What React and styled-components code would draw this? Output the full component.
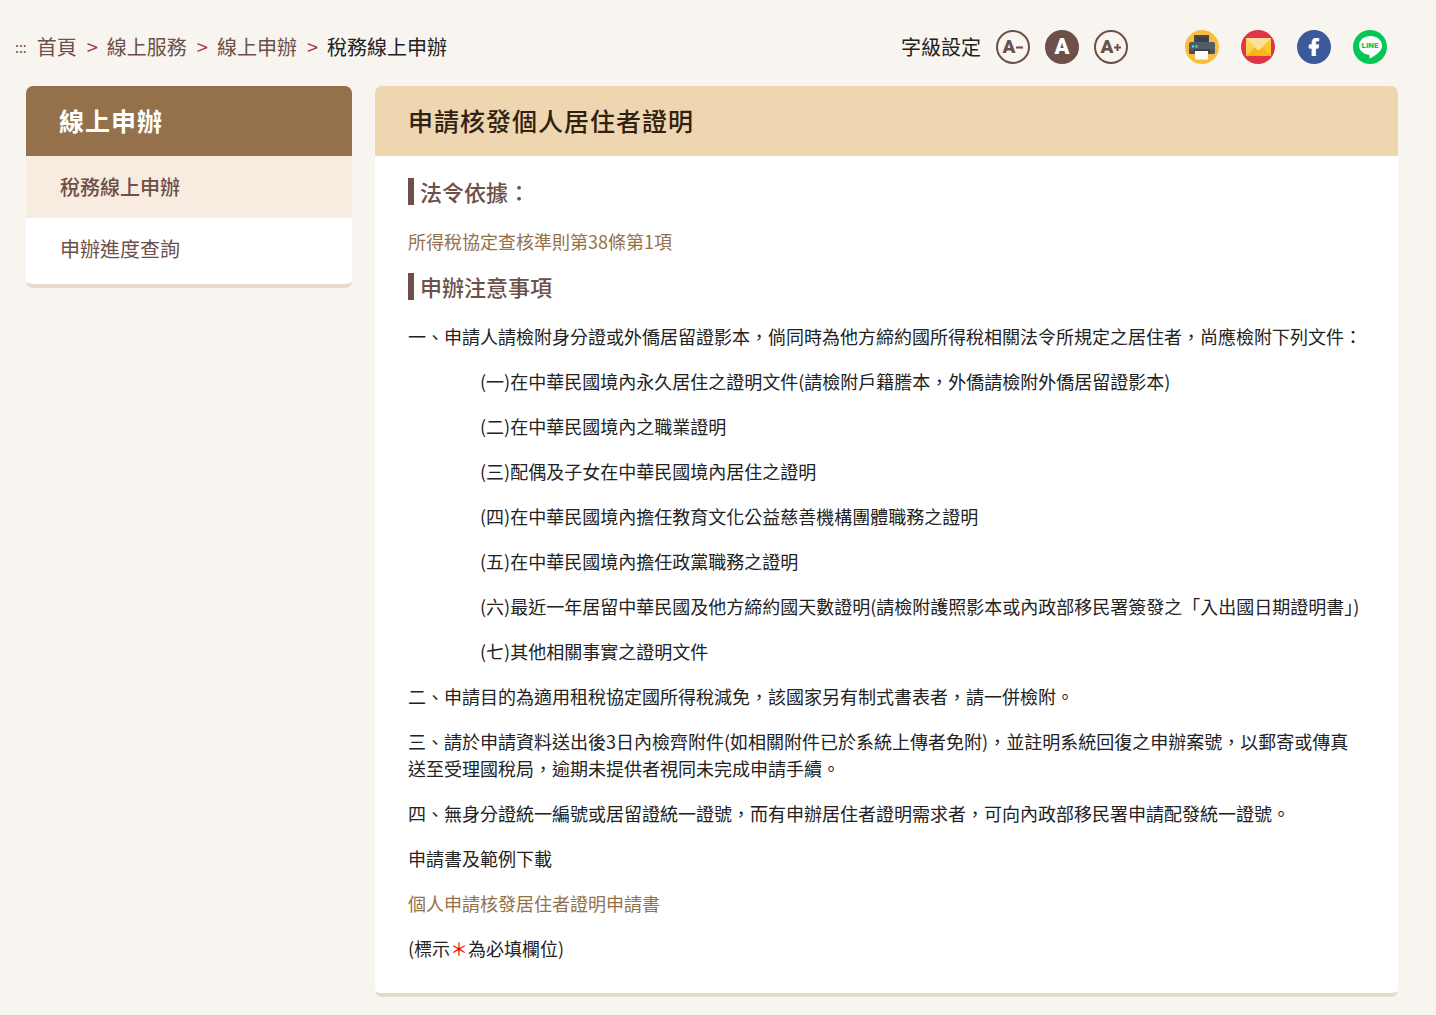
import styled, { createGlobalStyle } from "styled-components";
import { FaFacebookF } from "react-icons/fa";

const crumbs = ["首頁", "線上服務", "線上申辦"];

const documents = [
  "(一)在中華民國境內永久居住之證明文件(請檢附戶籍謄本，外僑請檢附外僑居留證影本)",
  "(二)在中華民國境內之職業證明",
  "(三)配偶及子女在中華民國境內居住之證明",
  "(四)在中華民國境內擔任教育文化公益慈善機構團體職務之證明",
  "(五)在中華民國境內擔任政黨職務之證明",
  "(六)最近一年居留中華民國及他方締約國天數證明(請檢附護照影本或內政部移民署簽發之「入出國日期證明書」)",
  "(七)其他相關事實之證明文件",
];

const PrintIcon = () => (
  <svg viewBox="0 0 34 34" aria-hidden="true">
    <circle cx="17" cy="17" r="17" fill="#f9bc3d" />
    <path d="M9 5h15v9H9z" fill="#454b54" />
    <path d="M11 7h11v7H11z" fill="#39404a" />
    <path d="M6 12h22a2 2 0 0 1 2 2v8a2 2 0 0 1-2 2H6a2 2 0 0 1-2-2v-8a2 2 0 0 1 2-2z" fill="#545c69" />
    <path d="M4 20h26v2a2 2 0 0 1-2 2H6a2 2 0 0 1-2-2z" fill="#4a515d" />
    <path d="M9 19h16v3H9z" fill="#394049" />
    <circle cx="8" cy="16.500" r="1.200" fill="#59d4d0" />
    <circle cx="11.500" cy="16.500" r="1.200" fill="#59d4d0" />
    <path d="M10 21h13v8.500H10z" fill="#fff" />
  </svg>
);

const MailIcon = () => (
  <svg viewBox="0 0 34 34" aria-hidden="true">
    <circle cx="17" cy="17" r="17" fill="#df3548" />
    <path d="M5 8h25v18H5z" fill="#fdcb34" />
    <path d="M5 26l9-9h7l9 9z" fill="#f9b514" />
    <path d="M5 8v18l9-9z" fill="#fed24a" />
    <path d="M30 8v18l-9-9z" fill="#fdc62a" />
    <path d="M5 8h25L19 19.500a2 2 0 0 1-3 0z" fill="#fee09a" />
  </svg>
);

const LineIcon = () => (
  <svg viewBox="0 0 34 34" aria-hidden="true">
    <circle cx="17" cy="17" r="17" fill="#06c755" />
    <path
      d="M17.500 6C11 6 6 10.200 6 15.500c0 4.700 4 8.500 9.500 9.300 1.200.2 1.300.7 1.100 1.900l-.2 1.300c0 .4.300.6.8.3 2.500-1.300 7.700-4.700 9.900-7.400 1.300-1.500 1.900-3.400 1.900-5.400C29 10.200 24 6 17.500 6z"
      fill="#fff"
    />
    <text x="17" y="18" textAnchor="middle" fontFamily="Roboto, sans-serif" fontSize="8" fontWeight="900" fill="#06c755">
      LINE
    </text>
  </svg>
);

const Sign = ({ plus }) => (
  <svg viewBox="0 0 8 8" aria-hidden="true">
    <path d={plus ? "M0 4h8M4 0v8" : "M0 4h8"} stroke="currentColor" strokeWidth="2.400" />
  </svg>
);

const App = () => {
  return (
    <>
      <GlobalStyle />
      <Topbar>
        <Breadcrumb aria-label="breadcrumb">
          <Accesskey href="#main">:::</Accesskey>
          <ol>
            {crumbs.map((crumb) => (
              <li key={crumb}>
                <a href="#">{crumb}</a>
              </li>
            ))}
            <li aria-current="page">稅務線上申辦</li>
          </ol>
        </Breadcrumb>
        <Tools>
          <FontSize>
            <span>字級設定</span>
            <SizeBtn type="button" aria-label="縮小字級">
              A<Sign />
            </SizeBtn>
            <SizeBtn type="button" $active aria-label="一般字級">
              A
            </SizeBtn>
            <SizeBtn type="button" aria-label="放大字級">
              A<Sign plus />
            </SizeBtn>
          </FontSize>
          <Share>
            <ShareLink href="#" aria-label="列印">
              <PrintIcon />
            </ShareLink>
            <ShareLink href="#" aria-label="電子郵件">
              <MailIcon />
            </ShareLink>
            <FacebookLink href="#" aria-label="Facebook">
              <FaFacebookF />
            </FacebookLink>
            <ShareLink href="#" aria-label="LINE">
              <LineIcon />
            </ShareLink>
          </Share>
        </Tools>
      </Topbar>
      <Container>
        <Sidebar>
          <SideTitle>線上申辦</SideTitle>
          <SideMenu>
            <li>
              <SideLink href="#" $active>
                稅務線上申辦
              </SideLink>
            </li>
            <li>
              <SideLink href="#">申辦進度查詢</SideLink>
            </li>
          </SideMenu>
        </Sidebar>
        <Content id="main">
          <PageTitle>申請核發個人居住者證明</PageTitle>
          <Article>
            <h3>法令依據：</h3>
            <p>
              <a href="#">所得稅協定查核準則第38條第1項</a>
            </p>
            <h3>申辦注意事項</h3>
            <p>一、申請人請檢附身分證或外僑居留證影本，倘同時為他方締約國所得稅相關法令所規定之居住者，尚應檢附下列文件：</p>
            <DocList>
              {documents.map((text) => (
                <li key={text}>{text}</li>
              ))}
            </DocList>
            <p>二、申請目的為適用租稅協定國所得稅減免，該國家另有制式書表者，請一併檢附。</p>
            <p>三、請於申請資料送出後3日內檢齊附件(如相關附件已於系統上傳者免附)，並註明系統回復之申辦案號，以郵寄或傳真送至受理國稅局，逾期未提供者視同未完成申請手續。</p>
            <p>四、無身分證統一編號或居留證統一證號，而有申辦居住者證明需求者，可向內政部移民署申請配發統一證號。</p>
            <p>申請書及範例下載</p>
            <p>
              <a href="#">個人申請核發居住者證明申請書</a>
            </p>
            <p>
              (標示<Required>＊</Required>為必填欄位)
            </p>
          </Article>
        </Content>
      </Container>
    </>
  );
};

export default App;

const GlobalStyle = createGlobalStyle`
  * {
    box-sizing: border-box;
  }
  body {
    margin: 0;
    background: #f8f4ef;
    color: #222;
    font-family: "Noto Sans CJK TC", sans-serif;
    font-size: 18px;
    line-height: 27px;
  }
  a {
    color: #94714a;
    text-decoration: none;
    &:hover {
      text-decoration: underline;
    }
  }
  ul, ol {
    list-style: none;
    margin: 0;
    padding: 0;
  }
`
const Topbar = styled.header`
  display: flex;
  justify-content: space-between;
  align-items: center;
  flex-wrap: wrap;
  padding: 30px 49px 22px 15px;
  font-size: 20px;
  line-height: 28px;
`
const Breadcrumb = styled.nav`
  display: flex;
  align-items: center;
  gap: 10px;
  ol {
    display: flex;
    flex-wrap: wrap;
  }
  li + li::before {
    content: '>';
    margin: 0 9px 0 10px;
    color: #a8383a;
  }
  li a {
    color: #6c5049;
  }
`
const Accesskey = styled.a`
  font-size: 14px;
  color: #6c5049;
`
const Tools = styled.div`
  display: flex;
  align-items: center;
  gap: 57px;
`
const FontSize = styled.div`
  display: flex;
  align-items: center;
  gap: 15px;
`
const SizeBtn = styled.button`
  display: flex;
  justify-content: center;
  align-items: center;
  gap: 1px;
  width: 34px;
  height: 34px;
  padding: 0;
  border: 2px solid #6c5049;
  border-radius: 50%;
  background: ${({ $active }) => ($active ? "#6c5049" : "transparent")};
  color: ${({ $active }) => ($active ? "#fff" : "#6c5049")};
  font-family: Roboto, sans-serif;
  font-size: ${({ $active }) => ($active ? "22px" : "19px")};
  font-weight: 900;
  line-height: 30px;
  cursor: pointer;
  svg {
    width: 7px;
    height: 7px;
  }
`
const Share = styled.div`
  display: flex;
  gap: 22px;
`
const ShareLink = styled.a`
  display: flex;
  justify-content: center;
  align-items: center;
  width: 34px;
  height: 34px;
  border-radius: 50%;
  svg {
    width: 100%;
    height: 100%;
  }
`
const FacebookLink = styled(ShareLink)`
  background: #3c5a99;
  color: #fff;
  svg {
    width: 18px;
    height: 18px;
    stroke-width: 24px;
  }
`
const Container = styled.div`
  display: grid;
  grid-template-columns: 326px 1fr;
  align-items: start;
  gap: 23px;
  padding: 0 38px 18px 26px;
  @media screen and (max-width: 768px) {
    grid-template-columns: 1fr;
    padding: 0 15px 18px;
  }
`
const Card = styled.div`
  overflow: hidden;
  background: #fff;
  border-bottom: 4px solid #e8dacb;
  border-radius: 7px;
`
const Sidebar = styled(Card).attrs({ as: "aside" })``

const Content = styled(Card).attrs({ as: "main" })``

const SideTitle = styled.h2`
  margin: 0;
  padding: 16px 33px 18px;
  background: #94714a;
  color: #fff;
  font-size: 25px;
  font-weight: 700;
  line-height: 36px;
  letter-spacing: 1px;
`
const PageTitle = styled(SideTitle)`
  background: #eed6b1;
  color: #33210f;
  font-weight: 500;
`
const SideMenu = styled.ul`
  padding-bottom: 4px;
`
const SideLink = styled.a`
  display: block;
  padding: 16px 34px;
  background: ${({ $active }) => ($active ? "#f8ebe0" : "#fff")};
  color: #6c5049;
  font-size: 20px;
  font-weight: ${({ $active }) => ($active ? 500 : 400)};
  line-height: 30px;
`
const Article = styled.article`
  padding: 22px 33px 13px;
  h3 {
    margin: 0 0 23px;
    padding-left: 6px;
    border-left: 6px solid #6c5049;
    color: #6c5049;
    font-size: 22px;
    font-weight: 500;
    line-height: 27px;
  }
  p {
    margin: 0 0 18px;
  }
`
const DocList = styled.ul`
  padding-left: 72px;
  li {
    margin-bottom: 18px;
  }
  @media screen and (max-width: 768px) {
    padding-left: 36px;
  }
`
const Required = styled.span`
  color: #f00;
`
